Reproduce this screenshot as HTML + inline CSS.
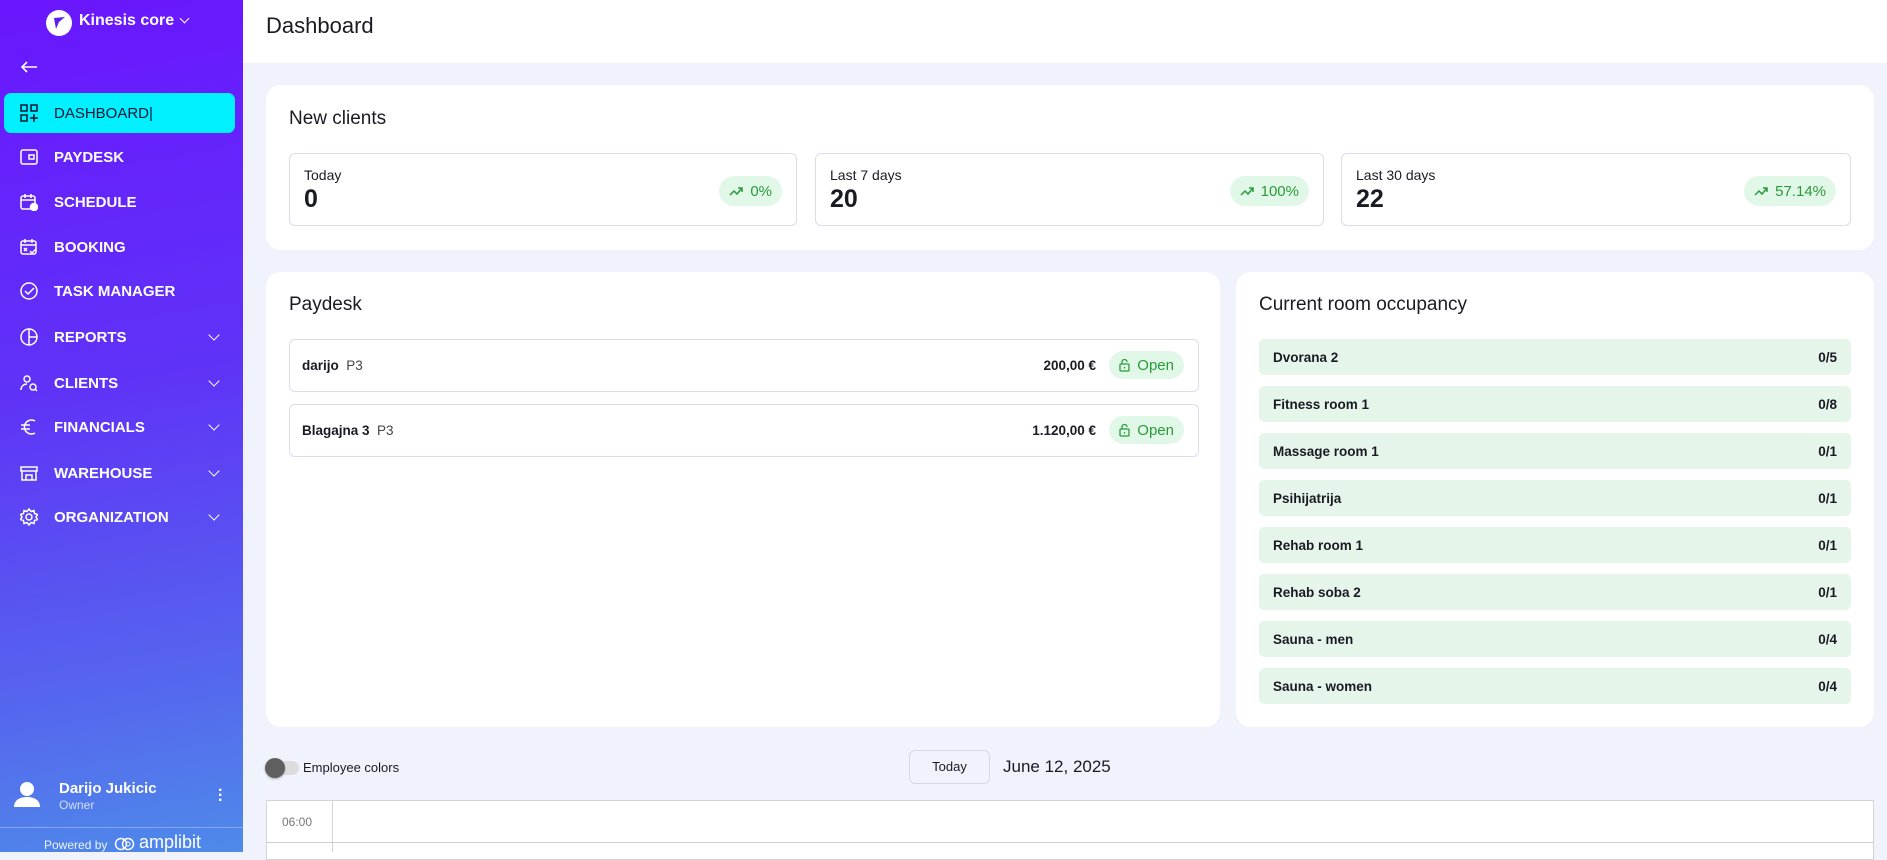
<!DOCTYPE html>
<html><head><meta charset="utf-8"><style>
*{box-sizing:border-box;margin:0;padding:0}
body{width:1887px;height:852px;overflow:hidden;font-family:"Liberation Sans",sans-serif;background:#f0f3fc;color:#1a1a24;position:relative}
.sb{position:absolute;left:0;top:0;width:243px;height:852px;background:linear-gradient(170deg,#6a16ff 0%,#5f33f7 45%,#5567ee 80%,#4e8ae9 100%);color:#fff}
.logo{position:absolute;left:46px;top:10px;width:26px;height:26px;border-radius:50%;background:#fff}
.brand{position:absolute;left:79px;top:12px;font-weight:bold;font-size:16px}
.nav{position:absolute;left:0;width:243px;height:40px;display:flex;align-items:center;font-weight:bold;font-size:15px}
.nav svg{position:absolute;left:20px}
.nav span{position:absolute;left:54px}
.nav .ch{position:absolute;left:210px;width:8px;height:8px;border-right:1.5px solid #fff;border-bottom:1.5px solid #fff;transform:rotate(45deg);margin-top:-5px}
.act{left:4px;width:231px;background:#00f0ff;border-radius:7px;color:#0c1633;font-weight:normal}
.act svg{left:16px}.act span{left:50px}
.hdr{position:absolute;left:243px;top:0;right:0;height:63px;background:#fff}
.hdr h1{position:absolute;left:23px;top:13px;font-size:22px;font-weight:normal}
.card{position:absolute;background:#fff;border-radius:15px}
.ct{position:absolute;font-size:19px}
.stat{position:absolute;top:68px;height:73px;border:1.5px solid #dcdcec;border-radius:6px}
.stat .l{position:absolute;left:14px;top:13px;font-size:14px}
.stat .v{position:absolute;left:14px;top:31px;font-size:25px;font-weight:bold}
.pill{position:absolute;right:14px;top:22px;height:30px;border-radius:15px;background:#e1f8e8;color:#2a9a3a;font-size:15px;display:flex;align-items:center;padding:0 10px;gap:7px}
.prow{position:absolute;left:23px;width:910px;height:53px;border:1.5px solid #dcdcec;border-radius:6px;font-size:13.5px}
.prow .n{position:absolute;left:12px;top:18px;font-weight:bold}
.prow .n span{font-weight:normal;color:#444}
.prow .a{position:absolute;right:102px;top:18px;font-weight:bold}
.prow .pill{right:14px;top:11px;height:28px;font-size:15px}
.room{position:absolute;left:23px;width:592px;height:36px;background:#e6f5ea;border-radius:5px;font-size:13.5px;font-weight:bold}
.room .n{position:absolute;left:14px;top:11px}
.room .o{position:absolute;right:14px;top:11px}
</style></head><body>
<div class="sb">
 <div class="logo"><svg width="26" height="26" viewBox="0 0 26 26"><path d="M8 8 L19 7 L13 12 L10 19 Z" fill="#5a1ff0"/></svg></div>
 <div class="brand">Kinesis core</div>
 <div style="position:absolute;left:181px;top:15px;width:7px;height:7px;border-right:1.5px solid #fff;border-bottom:1.5px solid #fff;transform:rotate(45deg)"></div>
 <svg style="position:absolute;left:20px;top:60px" width="18" height="14" viewBox="0 0 18 14"><path d="M17 7H2M7 2L2 7l5 5" stroke="#fff" stroke-width="1.6" fill="none"/></svg>
 <div class="nav act" style="top:93px"><svg width="18" height="18" viewBox="0 0 18 18" fill="none" stroke="#0c1633" stroke-width="1.5"><rect x="1" y="1" width="6" height="6"/><rect x="11" y="1" width="6" height="6"/><rect x="1" y="11" width="6" height="6"/><path d="M14 10v8M10 14h8"/></svg><span>DASHBOARD|</span></div>
 <div class="nav" style="top:137px"><svg width="18" height="18" viewBox="0 0 18 18" fill="none" stroke="#fff" stroke-width="1.5"><rect x="1" y="2" width="16" height="14" rx="2"/><rect x="9" y="7" width="5" height="4"/></svg><span>PAYDESK</span></div>
 <div class="nav" style="top:182px"><svg width="18" height="18" viewBox="0 0 18 18" fill="none" stroke="#fff" stroke-width="1.5"><rect x="1" y="3" width="14" height="13" rx="2"/><path d="M1 7h14M5 1v4M11 1v4"/><circle cx="14" cy="14" r="3.5" fill="#fff"/></svg><span>SCHEDULE</span></div>
 <div class="nav" style="top:227px"><svg width="18" height="18" viewBox="0 0 18 18" fill="none" stroke="#fff" stroke-width="1.5"><rect x="1" y="3" width="15" height="13" rx="2"/><path d="M1 7h15M5 1v4M12 1v4M4 10l3 3M7 10l-3 3M10 13l2 2 4-4"/></svg><span>BOOKING</span></div>
 <div class="nav" style="top:271px"><svg width="18" height="18" viewBox="0 0 18 18" fill="none" stroke="#fff" stroke-width="1.5"><circle cx="9" cy="9" r="8"/><path d="M5 9l3 3 6-6"/></svg><span>TASK MANAGER</span></div>
 <div class="nav" style="top:317px"><svg width="18" height="18" viewBox="0 0 18 18" fill="none" stroke="#fff" stroke-width="1.5"><circle cx="9" cy="9" r="8"/><path d="M9 1v16M9 9h8"/></svg><span>REPORTS</span><i class="ch"></i></div>
 <div class="nav" style="top:363px"><svg width="18" height="18" viewBox="0 0 18 18" fill="none" stroke="#fff" stroke-width="1.5"><circle cx="7" cy="5" r="3"/><path d="M1 16c0-4 3-6 6-6"/><circle cx="13" cy="13" r="3"/><path d="M15 15l2 2"/></svg><span>CLIENTS</span><i class="ch"></i></div>
 <div class="nav" style="top:407px"><svg width="18" height="18" viewBox="0 0 18 18" fill="none" stroke="#fff" stroke-width="1.5"><path d="M15 3a7 7 0 1 0 0 12M1 7h9M1 11h9"/></svg><span>FINANCIALS</span><i class="ch"></i></div>
 <div class="nav" style="top:453px"><svg width="18" height="18" viewBox="0 0 18 18" fill="none" stroke="#fff" stroke-width="1.5"><path d="M1 3h16v4H1zM2 7v9h14V7M6 16v-5h6v5"/></svg><span>WAREHOUSE</span><i class="ch"></i></div>
 <div class="nav" style="top:497px"><svg width="18" height="18" viewBox="0 0 18 18" fill="none" stroke="#fff" stroke-width="1.5"><circle cx="9" cy="9" r="3"/><path d="M9 1l2 2.5 3-1 .5 3 3 1-1.5 2.5 1.5 2.5-3 1-.5 3-3-1L9 17l-2-2.5-3 1-.5-3-3-1L2 9 .5 6.5l3-1 .5-3 3 1z"/></svg><span>ORGANIZATION</span><i class="ch"></i></div>
 <svg style="position:absolute;left:12px;top:780px" width="30" height="28" viewBox="0 0 30 28"><circle cx="15" cy="9" r="7" fill="#fff"/><path d="M2 27c0-7 6-10 13-10s13 3 13 10z" fill="#fff"/></svg>
 <div style="position:absolute;left:59px;top:780px;font-weight:bold;font-size:15px">Darijo Jukicic</div>
 <div style="position:absolute;left:59px;top:798px;font-size:12px;opacity:.75">Owner</div>
 <div style="position:absolute;left:218px;top:788px;font-size:16px;font-weight:bold;line-height:5px">·<br>·<br>·</div>
 <div style="position:absolute;left:0;top:827px;width:243px;height:1px;background:rgba(255,255,255,.3)"></div>
 <div style="position:absolute;left:44px;top:838px;font-size:12px;opacity:.9">Powered by</div>
 <svg style="position:absolute;left:114px;top:837px" width="22" height="14"><circle cx="7" cy="7" r="5.5" stroke="#fff" fill="none" stroke-width="1.4"/><circle cx="14" cy="7" r="5.5" stroke="#fff" fill="none" stroke-width="1.4"/><circle cx="14" cy="7" r="2" stroke="#fff" fill="none"/></svg>
 <div style="position:absolute;left:139px;top:832px;font-size:18px">amplibit</div>
</div>
<div class="hdr"><h1>Dashboard</h1></div>

<div class="card" style="left:266px;top:85px;width:1608px;height:165px">
 <div class="ct" style="left:23px;top:23px">New clients</div>
 <div class="stat" style="left:23px;width:508px"><div class="l">Today</div><div class="v">0</div><div class="pill"><svg width="14" height="10" viewBox="0 0 14 10" fill="none" stroke="#2a9a3a" stroke-width="1.5"><path d="M1 9l4-4 3 3 5-6M9 2h4v4"/></svg>0%</div></div>
 <div class="stat" style="left:549px;width:509px"><div class="l">Last 7 days</div><div class="v">20</div><div class="pill"><svg width="14" height="10" viewBox="0 0 14 10" fill="none" stroke="#2a9a3a" stroke-width="1.5"><path d="M1 9l4-4 3 3 5-6M9 2h4v4"/></svg>100%</div></div>
 <div class="stat" style="left:1075px;width:510px"><div class="l">Last 30 days</div><div class="v">22</div><div class="pill"><svg width="14" height="10" viewBox="0 0 14 10" fill="none" stroke="#2a9a3a" stroke-width="1.5"><path d="M1 9l4-4 3 3 5-6M9 2h4v4"/></svg>57.14%</div></div>
</div>

<div class="card" style="left:266px;top:272px;width:954px;height:455px">
 <div class="ct" style="left:23px;top:22px">Paydesk</div>
 <div class="prow" style="top:67px"><div class="n">darijo &nbsp;<span>P3</span></div><div class="a">200,00 €</div><div class="pill"><svg width="11" height="14" viewBox="0 0 11 14" fill="none" stroke="#2a9a3a" stroke-width="1.3"><rect x="1" y="6" width="9" height="7" rx="1"/><path d="M3 6V4a2.5 2.5 0 0 1 5 0"/><path d="M5.5 9v1.5"/></svg>Open</div></div>
 <div class="prow" style="top:132px"><div class="n">Blagajna 3 &nbsp;<span>P3</span></div><div class="a">1.120,00 €</div><div class="pill"><svg width="11" height="14" viewBox="0 0 11 14" fill="none" stroke="#2a9a3a" stroke-width="1.3"><rect x="1" y="6" width="9" height="7" rx="1"/><path d="M3 6V4a2.5 2.5 0 0 1 5 0"/><path d="M5.5 9v1.5"/></svg>Open</div></div>
</div>

<div class="card" style="left:1236px;top:272px;width:638px;height:455px">
 <div class="ct" style="left:23px;top:22px">Current room occupancy</div>
 <div class="room" style="top:67px"><div class="n">Dvorana 2</div><div class="o">0/5</div></div>
 <div class="room" style="top:114px"><div class="n">Fitness room 1</div><div class="o">0/8</div></div>
 <div class="room" style="top:161px"><div class="n">Massage room 1</div><div class="o">0/1</div></div>
 <div class="room" style="top:208px"><div class="n">Psihijatrija</div><div class="o">0/1</div></div>
 <div class="room" style="top:255px"><div class="n">Rehab room 1</div><div class="o">0/1</div></div>
 <div class="room" style="top:302px"><div class="n">Rehab soba 2</div><div class="o">0/1</div></div>
 <div class="room" style="top:349px"><div class="n">Sauna - men</div><div class="o">0/4</div></div>
 <div class="room" style="top:396px"><div class="n">Sauna - women</div><div class="o">0/4</div></div>
</div>

<div style="position:absolute;left:266px;top:761px;width:33px;height:14px;border-radius:7px;background:#ddd"></div>
<div style="position:absolute;left:265px;top:758px;width:20px;height:20px;border-radius:50%;background:#5f5f5f;box-shadow:0 1px 2px rgba(0,0,0,.3)"></div>
<div style="position:absolute;left:303px;top:760px;font-size:13px">Employee colors</div>
<div style="position:absolute;left:909px;top:750px;width:81px;height:34px;border:1px solid #d6d8e2;border-radius:6px;font-size:13px;text-align:center;line-height:32px">Today</div>
<div style="position:absolute;left:1003px;top:757px;font-size:17px">June 12, 2025</div>
<div style="position:absolute;left:266px;top:800px;width:1608px;height:60px;background:#fff;border:1px solid #d4d4d8"></div>
<div style="position:absolute;left:332px;top:800px;width:1px;height:52px;background:#d4d4d8"></div>
<div style="position:absolute;left:266px;top:842px;width:1608px;height:1px;background:#cfcfcf"></div>
<div style="position:absolute;left:282px;top:815px;font-size:12px;color:#777">06:00</div>
</body></html>
